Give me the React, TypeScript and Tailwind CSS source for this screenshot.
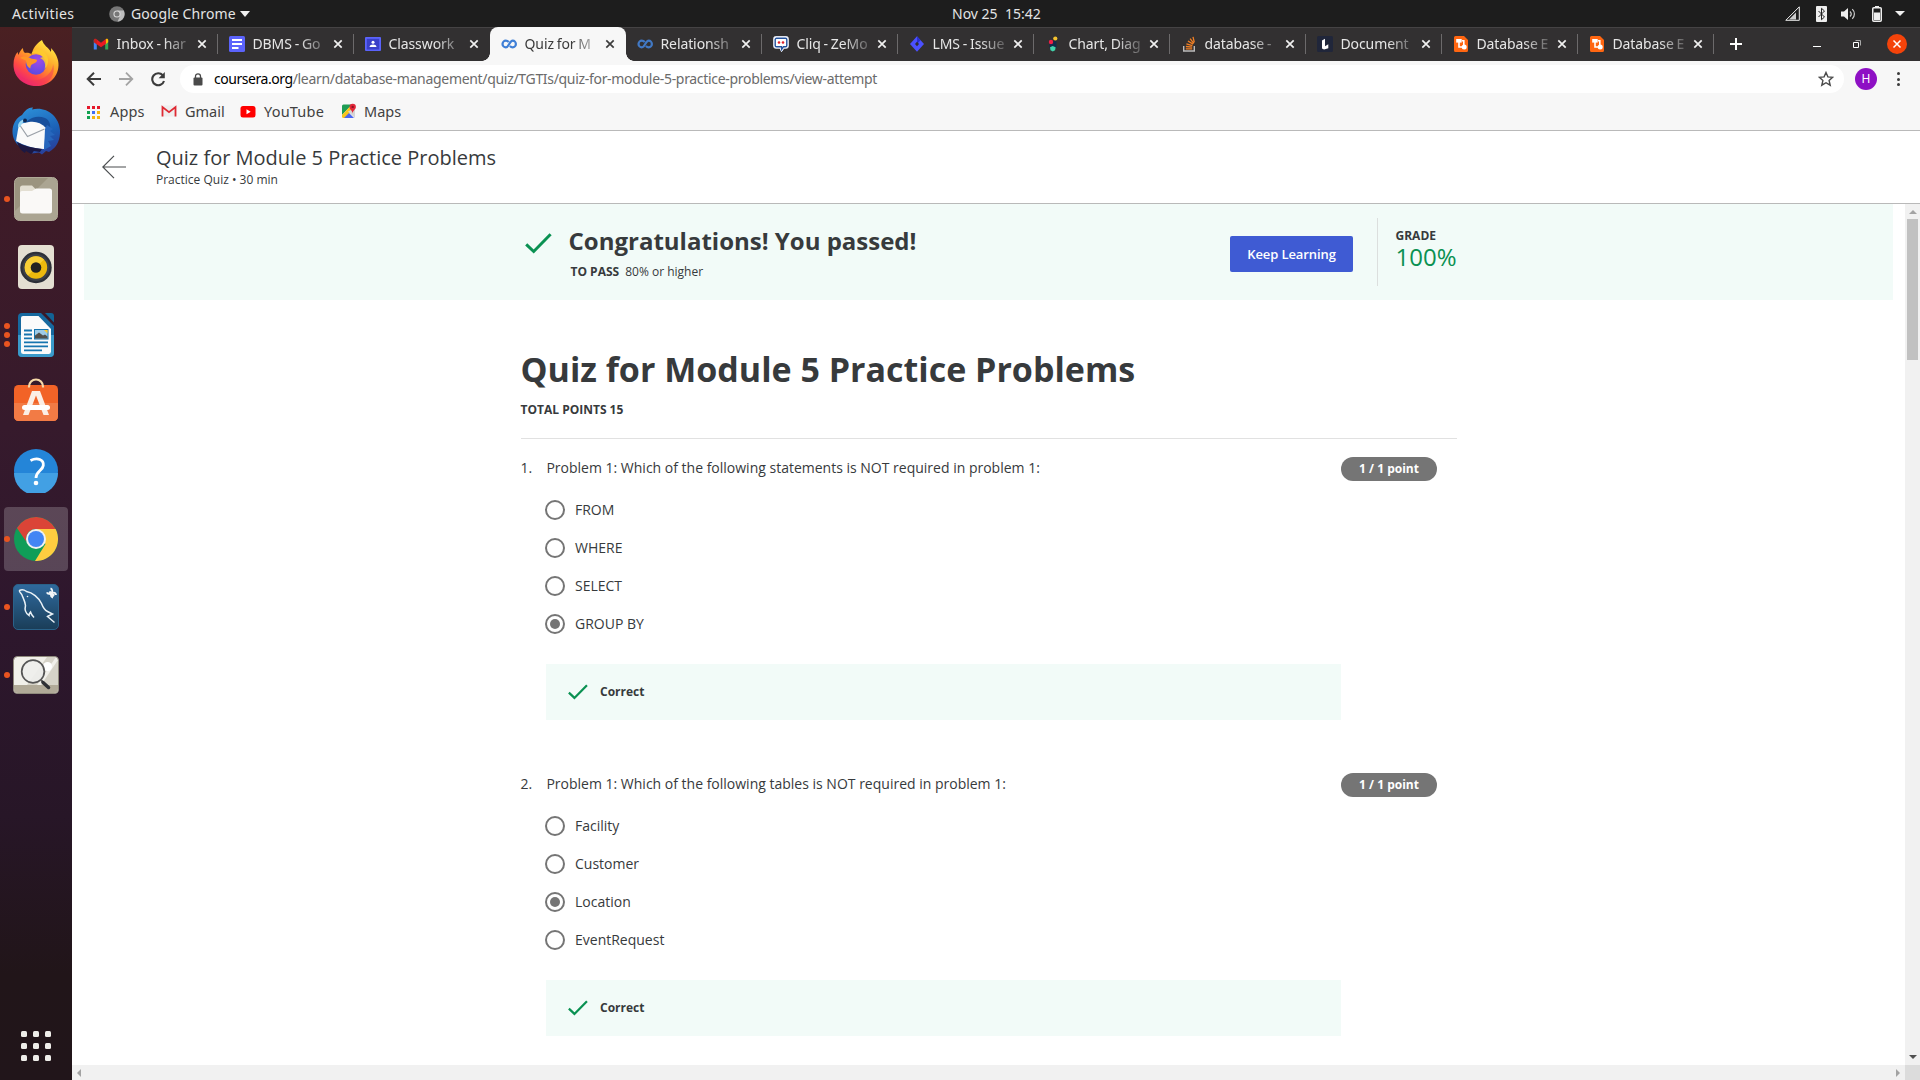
import React from "react";

const UI = "font-['Noto_Sans','Open_Sans',sans-serif]";

function Coursera({ color }: { color: string }) {
  return (
    <svg viewBox="0 0 16 16" className="h-4 w-4" fill="none" stroke={color} strokeWidth="2.200">
      <path d="M7.700 6C6.800 5 5.800 4.700 4.800 4.700a3.300 3.300 0 0 0 0 6.600C8 11.300 8.500 4.700 11.700 4.700a3.200 3.300 0 0 1 0 6.600c-1.200 0-2-.4-2.800-1.300" />
    </svg>
  );
}

function DocsIcon() {
  return (
    <svg viewBox="0 0 16 16" className="h-4 w-4">
      <rect width="16" height="16" rx="1.500" fill="#5b63fb" />
      <path d="M3 4h10M3 8h10M3 12h6.500" stroke="#fff" strokeWidth="1.800" />
    </svg>
  );
}

function ClassroomIcon() {
  return (
    <svg viewBox="0 0 16 16" className="h-4 w-4">
      <rect y="1" width="16" height="14" rx="1" fill="#5b63fb" />
      <rect x="1.800" y="2.800" width="12.400" height="10.700" fill="#3a40c8" />
      <circle cx="8" cy="6.300" r="1.500" fill="#fff" />
      <path d="M4.500 11c0-3.300 7-3.300 7 0z" fill="#fff" />
    </svg>
  );
}

function GmailColor() {
  return (
    <svg viewBox="0 0 16 16" className="h-4 w-4">
      <path d="M0.800 4v9.500h3V7z" fill="#4285f4" />
      <path d="M12.200 7v6.500h3V4z" fill="#34a853" />
      <path d="M12.200 4.800V8.400l3-2.200V4c0-1.200-1.500-1.600-2.300-.9z" fill="#fbbc04" />
      <path d="M3.300 3.100L8 6.700l4.700-3.600.3 4.700L8 11.300 3 7.800z" fill="#ea1a22" />
      <path d="M.8 4c0-1.200 1.500-1.600 2.500-.9l.5 5.300-3-2.200z" fill="#c5221f" />
    </svg>
  );
}

function CliqIcon() {
  return (
    <svg viewBox="0 0 16 16" className="h-4 w-4">
      <path d="M2.500 .6h11a1.800 1.800 0 0 1 1.800 1.800v8a1.800 1.800 0 0 1-1.800 1.800H11l-2.500 3.500L7 12.200H2.500A1.800 1.800 0 0 1 .7 10.400v-8A1.800 1.800 0 0 1 2.500 .6z" fill="#fff" stroke="#e8ecf8" />
      <path d="M3.500 2.300h9a1.300 1.300 0 0 1 1.300 1.300v5.800a1.300 1.300 0 0 1-1.300 1.300h-2L8.700 13.300 8.500 10.700h-5A1.300 1.300 0 0 1 2.200 9.400V3.600a1.300 1.300 0 0 1 1.300-1.300z" fill="#fff" stroke="#23519d" strokeWidth="1.400" />
      <circle cx="6" cy="6.500" r="1.300" fill="#e0202a" />
      <circle cx="10" cy="6.500" r="1.300" fill="#e0202a" />
    </svg>
  );
}

function JiraIcon() {
  return (
    <svg viewBox="0 0 16 16" className="h-4 w-4">
      <path d="M8 .3l7 7.700-7 7.700L1 8z" fill="#4b50ff" />
      <path d="M8 .3l3.500 3.900L8 8z" fill="#2a2fd0" />
      <path d="M8 5.700L10 8l-2 2.300L6 8z" fill="#302e30" />
    </svg>
  );
}

function ChartIcon() {
  return (
    <svg viewBox="0 0 16 16" className="h-4 w-4">
      <path d="M4.500 5h7v7H4.500z" fill="#132a4a" />
      <circle cx="10.300" cy="2.500" r="2.100" fill="#f5c22e" />
      <circle cx="6" cy="6" r="2.200" fill="#ef1f46" />
      <path d="M5 11.300l2.700-1.300 2.900 1.300-.5 3-2.300 1.200-2.300-1.200z" fill="#41d3ac" />
    </svg>
  );
}

function StackIcon() {
  return (
    <svg viewBox="0 0 16 16" className="h-4 w-4" fill="none">
      <path d="M2.700 10v5h10.600v-5" stroke="#bcbbbb" strokeWidth="1.400" />
      <path d="M4.800 12.900h6.400M4.900 10.500l6.300.6M5.400 7.800l6 1.800M6.900 5l5.200 3.100M9.100 2.600l3.700 4.700M12 .8l1.300 5.500" stroke="#f48024" strokeWidth="1.300" />
    </svg>
  );
}

function DocumentIcon() {
  return (
    <svg viewBox="0 0 16 16" className="h-4 w-4">
      <rect width="16" height="16" rx="1.500" fill="#20263a" />
      <path d="M5 4.500l3-1.800v7.600l3.300-2v4L7 13.400l-2-1z" fill="#fff" />
    </svg>
  );
}

function CreatelyIcon() {
  return (
    <svg viewBox="0 0 16 16" className="h-4 w-4">
      <path d="M1 1.500A1.500 1.500 0 0 1 2.500 0H11l4 4v10.500a1.500 1.500 0 0 1-1.500 1.500h-11A1.500 1.500 0 0 1 1 14.500z" fill="#ff6611" />
      <rect x="3.200" y="3" width="5.500" height="3.600" fill="#fff" />
      <path d="M6 6v5h4M9 4.800h1.800V9" stroke="#fff" strokeWidth="1.600" fill="none" />
      <circle cx="11.200" cy="11" r="2.500" fill="#fff" />
    </svg>
  );
}

const tabs = [
  { title: "Inbox - har", icon: <GmailColor /> },
  { title: "DBMS - Go", icon: <DocsIcon /> },
  { title: "Classwork", icon: <ClassroomIcon /> },
  { title: "Quiz for M", icon: <Coursera color="#3f7fd6" />, active: true },
  { title: "Relationsh", icon: <Coursera color="#4178c4" /> },
  { title: "Cliq - ZeMo", icon: <CliqIcon /> },
  { title: "LMS - Issue", icon: <JiraIcon /> },
  { title: "Chart, Diag", icon: <ChartIcon /> },
  { title: "database -", icon: <StackIcon /> },
  { title: "Document", icon: <DocumentIcon /> },
  { title: "Database E", icon: <CreatelyIcon /> },
  { title: "Database E", icon: <CreatelyIcon /> },
];

function Tab({ title, icon, active, divider }: { title: string; icon: React.ReactNode; active?: boolean; divider: boolean }) {
  return (
    <div
      className={
        "relative flex h-[34px] w-[136px] shrink-0 items-center pl-[11px] " +
        (active ? "rounded-t-lg bg-[#f7f7f7] text-[#3c3c3c]" : "text-[#e6e6e6]")
      }
    >
      {active && (
        <>
          <span className="absolute bottom-0 -left-2 h-2 w-2 bg-[radial-gradient(circle_at_0_0,#323031_7.500px,#f7f7f7_8px)]" />
          <span className="absolute -right-2 bottom-0 h-2 w-2 bg-[radial-gradient(circle_at_100%_0,#323031_7.500px,#f7f7f7_8px)]" />
        </>
      )}
      <span className="-ml-[0.500px] shrink-0">{icon}</span>
      <span className="ml-2 w-[75px] text-[14px] leading-5 tracking-[-0.100px] whitespace-nowrap [word-spacing:-0.700px] [mask-image:linear-gradient(to_right,#000_62%,rgba(0,0,0,0.150))]">
        {title}
      </span>
      <svg viewBox="0 0 10 10" className="ml-[5.500px] h-[10px] w-[10px]" stroke={active ? "#3c3c3c" : "#f0f0f0"} strokeWidth="1.700">
        <path d="M1.300 1.300l7.400 7.400M8.700 1.300L1.300 8.700" />
      </svg>
      {divider && <span className="absolute top-[7px] right-0 h-[20px] w-px bg-[#6c6a6b]" />}
    </div>
  );
}

function TopBar() {
  return (
    <div className={"flex h-[27px] shrink-0 items-center bg-[#1d1d1d] text-[14px] leading-5 text-[#e4e4e4] " + UI}>
      <span className="w-[97px] pl-3 tracking-[0.400px] whitespace-nowrap">Activities</span>
      <svg viewBox="0 0 16 16" className="ml-3 h-4 w-4">
        <circle cx="8" cy="8" r="7.800" fill="#777" />
        <path d="M8 4.500h6.700A7.800 7.800 0 0 1 8.500 15.700L11 10z" fill="#bdbdbd" />
        <circle cx="8" cy="8" r="3.600" fill="#d8d8d8" />
        <circle cx="8" cy="8" r="2.500" fill="#777" />
      </svg>
      <span className="ml-[6px] w-[105px] whitespace-nowrap tracking-[0.100px]">Google Chrome</span>
      <svg viewBox="0 0 10 6" className="ml-1 h-[6px] w-[10px]" fill="#f0f0f0"><path d="M0 0h10L5 6z" /></svg>
      <span className="ml-[702px] w-[90px] whitespace-pre">Nov 25  15:42</span>
      <div className="ml-auto flex items-center pr-[15px]">
        <svg viewBox="0 0 15 15" className="mr-[16px] h-[15px] w-[15px]">
          <path d="M.8 14.300L14.300.8v13.500z" fill="none" stroke="#eee" />
          <path d="M4 13.500L11 6.500v7z" fill="#ccc" />
        </svg>
        <svg viewBox="0 0 11 16" className="mr-[14px] h-4 w-[11px]">
          <rect width="11" height="16" rx="1" fill="#eee" />
          <path d="M2.500 5l6 6-3 2.700V2.300l3 2.700-6 6" fill="none" stroke="#222" />
        </svg>
        <svg viewBox="0 0 15 14" className="mr-[16px] h-[14px] w-[15px]">
          <path d="M0 4.500h3L7 1v12L3 9.500H0z" fill="#eee" />
          <path d="M9 4.500c1.500 1.500 1.500 3.500 0 5M11.300 2.200c2.800 2.800 2.800 6.800 0 9.600" fill="none" stroke="#ccc" strokeWidth="1.200" />
        </svg>
        <svg viewBox="0 0 10 16" className="mr-[13px] h-4 w-[10px]">
          <rect x="0.750" y="1.750" width="8.500" height="13.500" rx="1" fill="none" stroke="#eee" strokeWidth="1.500" />
          <path d="M3 0h4v2H3zM2 6.500h6V14H2z" fill="#eee" />
        </svg>
        <svg viewBox="0 0 10 5" className="h-[5px] w-[10px]" fill="#f0f0f0"><path d="M0 0h10L5 5z" /></svg>
      </div>
    </div>
  );
}

function Firefox() {
  return (
    <svg viewBox="0 0 46 46" className="h-[46px] w-[46px]">
      <defs>
        <linearGradient id="ff" x1="0.800" y1="0.100" x2="0.200" y2="1">
          <stop offset="0" stopColor="#ffe640" />
          <stop offset="0.400" stopColor="#ff9a28" />
          <stop offset="0.700" stopColor="#ff4a45" />
          <stop offset="1" stopColor="#e31587" />
        </linearGradient>
        <radialGradient id="ffp" cx="0.600" cy="0.300" r="0.700">
          <stop offset="0" stopColor="#a14ae6" />
          <stop offset="1" stopColor="#5b4be0" />
        </radialGradient>
      </defs>
      <path d="M29 0c2 6 6 7 9 12 0-1 .5-3 0-4 4 4 8 11 7.500 17.500C45 38 35 46 23.500 46 10 46 .5 36 .5 25c0-6 1.500-10 4-13l1 3c1-3 2.500-5.500 4.500-7 0 2 .5 4 2 5 3-.5 5 .3 7 1.500C19 9 24 3 29 0z" fill="url(#ff)" />
      <circle cx="23" cy="24.500" r="10.300" fill="url(#ffp)" />
      <path d="M18 14c3-1.500 9-1 12 3l-3 1c5 2 6 7 4.500 11 6-6 4-14-1.500-18C25 8 20 10 18 14z" fill="#ffcb2e" opacity="0.850" />
      <path d="M7 18c4-3 9-1 11 .5 3 1 6 .3 6 2 0 2.500-5 3-6 5-1 2-.5 3-.5 3C14 27 13 23 13 20.500z" fill="#ff9526" />
      <path d="M1 27c4 14 20 17 31 10 6-4 8-9 8-13 3 9-3 21-16 22C12 46.500 1 38 1 27z" fill="#f03060" opacity="0.450" />
    </svg>
  );
}

function Thunderbird() {
  return (
    <svg viewBox="0 0 48 48" className="h-12 w-12">
      <defs>
        <linearGradient id="tb" x1="0.300" y1="0" x2="0.700" y2="1">
          <stop offset="0" stopColor="#2c8fd8" />
          <stop offset="0.600" stopColor="#1b5fb5" />
          <stop offset="1" stopColor="#2a3d98" />
        </linearGradient>
      </defs>
      <path d="M10 8C13 3 17 0 21 .5l-1 2C34-1 47 9 48 23c.5 11-4 18-11 22l-3-1-4 3.500-3-2-7 1 1-2C11 45 0 36 .5 24 .7 17 4 11 10 8z" fill="url(#tb)" />
      <path d="M10 22c2-8 12-15 23-11 4 2 6 6 5 11l-4 8-20-8z" fill="#174f9c" />
      <path d="M7 17l10-2c7-1 12 1 17 6l-2 21C22 42 11 38 4 34z" fill="#fafafa" />
      <path d="M7 17l8.500 12.500L32.500 22" fill="none" stroke="#9ba1a8" strokeWidth="1.200" />
      <path d="M35 18l6 4-3 2 5 4-5 1 4 4-6 1 3 5-7 4 1-21z" fill="#2767bd" />
      <path d="M5 35c7 4 16 6 25 7l-2 3-6-1-3 3-5-3-1 2c-4-2-7-7-8-11z" fill="#1c1842" />
      <path d="M6 20c0-5 3-7 7-8l-5 8z" fill="#9bd7f2" />
      <circle cx="13" cy="13.500" r="2" fill="#0d2752" />
    </svg>
  );
}

function Files() {
  return (
    <svg viewBox="0 0 44 44" className="h-11 w-11">
      <rect x="0.500" y="0.500" width="43" height="43" rx="5" fill="#9b947f" stroke="#b0aa98" />
      <path d="M34 1h5a4 4 0 0 1 4 4v34a4 4 0 0 1-4 4H5a4 4 0 0 1-4-4v-5z" fill="#aba592" />
      <path d="M6 11a2.500 2.500 0 0 1 2.500-2.500H18l4 4h10V20H6z" fill="#e3dfd2" />
      <path d="M6 16a2 2 0 0 1 2-2h10l4-2.500h13.500A2.500 2.500 0 0 1 38 14v20a2.500 2.500 0 0 1-2.500 2.500h-27A2.500 2.500 0 0 1 6 34z" fill="#faf9f7" />
    </svg>
  );
}

function Rhythmbox() {
  return (
    <svg viewBox="0 0 36 44" className="h-11 w-9">
      <rect width="36" height="44" rx="4" fill="#e4dfd2" />
      <circle cx="18" cy="22.500" r="15.700" fill="#2d3038" />
      <circle cx="18" cy="22.500" r="13.500" fill="#3d4148" />
      <circle cx="18" cy="22.500" r="11.200" fill="#ecb90d" />
      <path d="M10 14.500a11.200 11.200 0 0 1 16 0L10 30.500a11.200 11.200 0 0 1 0-16z" fill="#f8cf37" />
      <circle cx="18" cy="22.500" r="5.300" fill="#222" />
    </svg>
  );
}

function Writer() {
  return (
    <svg viewBox="0 0 36 44" className="h-11 w-9">
      <path d="M4 0h19l13 13v27a4 4 0 0 1-4 4H4a4 4 0 0 1-4-4V4a4 4 0 0 1 4-4z" fill="#16699f" />
      <path d="M0 22h36v18a4 4 0 0 1-4 4H4a4 4 0 0 1-4-4z" fill="#3a9aca" />
      <path d="M27 0h6a3 3 0 0 1 3 3v6.500z" fill="#126395" />
      <path d="M5 3h15.500L33 16v22.500a2.500 2.500 0 0 1-2.500 2.500h-25A2.500 2.500 0 0 1 3 38.500V5a2 2 0 0 1 2-2z" fill="#fbfbfb" />
      <path d="M6 17.500h8M6 21.500h8M6 25.300h8M6 29.300h24M6 33.300h24M6 37.300h18" stroke="#1675af" strokeWidth="1.800" />
      <rect x="16.500" y="16.500" width="13.500" height="9.500" fill="#9dcbe8" stroke="#1675af" />
      <path d="M17 25.500v-3l4-3 4 3 2-1 2.500 2v2z" fill="#50504c" />
      <path d="M26 17h3.500v3.500z" fill="#ffca28" />
    </svg>
  );
}

function Software() {
  return (
    <svg viewBox="0 0 44 43" className="mb-[7px] h-[43px] w-11">
      <rect y="7" width="44" height="36" rx="4.500" fill="#f26327" />
      <path d="M0 25h44v13.500a4.500 4.500 0 0 1-4.500 4.500h-35A4.500 4.500 0 0 1 0 38.500z" fill="#f27b45" />
      <path d="M15 9.500V8.500a7 7 0 0 1 14 0v1" fill="none" stroke="#f7d9a8" strokeWidth="2.200" />
      <path d="M18 13h8l9 24h-5.500L22 17.500 14.500 37H9z" fill="#fbeee5" />
      <rect x="8" y="27" width="28" height="5" rx="2.500" fill="#fff" />
    </svg>
  );
}

function Help() {
  return (
    <svg viewBox="0 0 44 44" className="h-11 w-11">
      <circle cx="22" cy="22" r="22" fill="#2485d8" />
      <path d="M0 24h44a22 22 0 0 1-44 0z" fill="#42a0e4" />
      <path d="M16.500 11.500c7-3.500 13.500-1 12.800 5-.6 5-7.300 5.500-7.300 12.500" fill="none" stroke="#fff" strokeWidth="2.800" />
      <circle cx="22" cy="34" r="2.300" fill="#fff" />
    </svg>
  );
}

function Chrome() {
  return (
    <svg viewBox="0 0 44 44" className="h-11 w-11">
      <circle cx="22" cy="22" r="22" fill="#0f9d58" />
      <path d="M22 12h19.600A22 22 0 0 1 21 44l10.500-17z" fill="#ffcd40" />
      <path d="M3 11A22 22 0 0 1 41.600 12H22a10 10 0 0 0-9.500 13z" fill="#db4437" />
      <circle cx="22" cy="22" r="10" fill="#f1f1f1" />
      <circle cx="22" cy="22" r="8" fill="#4285f4" />
    </svg>
  );
}

function Workbench() {
  return (
    <svg viewBox="0 0 46 46" className="h-[46px] w-[46px]">
      <defs>
        <linearGradient id="wb" x1="0" y1="0" x2="0" y2="1">
          <stop offset="0" stopColor="#2f6a9e" />
          <stop offset="1" stopColor="#1a3d58" />
        </linearGradient>
      </defs>
      <rect x="0.500" y="0.500" width="45" height="45" rx="4.500" fill="url(#wb)" stroke="#2a6289" />
      <path d="M21 33.500c-1.500-1.500-3-3.500-3.500-5.500-1 1-1.500 2-1.500 3.500-3-2-4.500-6-3.500-10C12 17 10 14 9 11c-1-2-3-3-2.500-4.500 2-1 5-.5 7 1 6 1 12 6 15 12 1.500 4 3 6.500 6 8l5 2.500-5 2.500 7 6" fill="none" stroke="#e9f1f6" strokeWidth="1.500" />
      <path d="M36 8l5 4" stroke="#f1f5f8" strokeWidth="3.200" />
      <path d="M33.800 8.300a2.900 2.900 0 1 0 3.700-4M40 13.500a2.500 2.500 0 1 1 3-2.500" fill="none" stroke="#f1f5f8" strokeWidth="1.800" />
      <circle cx="14.500" cy="12.500" r="0.800" fill="#e9f1f6" />
    </svg>
  );
}

function Viewer() {
  return (
    <svg viewBox="0 0 46 38" className="h-[38px] w-[46px]">
      <rect x="0.500" y="0.500" width="45" height="37" rx="4" fill="#f1f0ea" stroke="#8f8a7c" />
      <path d="M28 29L45 4v25zM14 29L34 1h9L24 29z" fill="#d6d3c8" />
      <path d="M1 29h44v4a4 4 0 0 1-4 4H5a4 4 0 0 1-4-4z" fill="#b1aa98" />
      <circle cx="34.500" cy="10.500" r="4.500" fill="#fff" />
      <circle cx="20" cy="15.500" r="11.300" fill="#eeeeec" fillOpacity="0.900" stroke="#555" strokeWidth="1.700" />
      <path d="M28 24l2.500 2.500" stroke="#555" strokeWidth="2" />
      <path d="M30 26.500l5.500 5" stroke="#2e3034" strokeWidth="3.500" strokeLinecap="round" />
    </svg>
  );
}

const dock = [
  { icon: <Firefox />, dots: 0 },
  { icon: <Thunderbird />, dots: 0 },
  { icon: <Files />, dots: 1 },
  { icon: <Rhythmbox />, dots: 0 },
  { icon: <Writer />, dots: 3 },
  { icon: <Software />, dots: 0 },
  { icon: <Help />, dots: 0 },
  { icon: <Chrome />, dots: 1, active: true },
  { icon: <Workbench />, dots: 1 },
  { icon: <Viewer />, dots: 1 },
];

function Dock() {
  return (
    <div className="flex w-[72px] shrink-0 flex-col items-center gap-1 bg-[linear-gradient(to_bottom,#4a2022_0%,#3f1b27_14%,#361a2c_38%,#2e172d_55%,#271627_75%,#211519_90%,#21151a_100%)] pt-[4px]">
      {dock.map((d, i) => (
        <div key={i} className={"relative flex h-16 w-16 shrink-0 items-center justify-center rounded " + (d.active ? "bg-white/20" : "")}>
          {d.icon}
          {d.dots > 0 && (
            <div className="absolute top-0 left-0 flex h-full flex-col justify-center gap-[3px]">
              {Array.from({ length: d.dots }, (_, k) => (
                <span key={k} className="h-[6px] w-[6px] rounded-full bg-[#e95420]" />
              ))}
            </div>
          )}
        </div>
      ))}
      <div className="mt-auto mb-[19px] grid grid-cols-3 gap-[6px]">
        {Array.from({ length: 9 }, (_, k) => (
          <span key={k} className="h-[6px] w-[6px] rounded-[1.500px] bg-[#efeeea]" />
        ))}
      </div>
    </div>
  );
}

function TabStrip() {
  return (
    <div className="flex h-[34px] shrink-0 items-center bg-[#323031] pl-[10px] shadow-[inset_0_1px_0_#454344]">
      {tabs.map((t, i) => (
        <Tab key={i} title={t.title} icon={t.icon} active={t.active} divider={i !== 2 && i !== 3} />
      ))}
      <svg viewBox="0 0 12 12" className="ml-[16px] h-3 w-3" stroke="#fff" strokeWidth="2"><path d="M6 0v12M0 6h12" /></svg>
      <div className="ml-auto flex items-center pr-[13px]">
        <span className="mt-[5px] mr-[32px] h-px w-2 bg-white" />
        <svg viewBox="0 0 8 8" className="mr-[26px] h-2 w-2" fill="none"><path d="M2.500.5h5v5" stroke="#aaa" /><path d="M.5 2.500h5v5h-5z" stroke="#fff" /></svg>
        <svg viewBox="0 0 20 20" className="h-5 w-5">
          <circle cx="10" cy="10" r="10" fill="#f4430a" />
          <path d="M6.500 6.500l7 7M13.500 6.500l-7 7" stroke="#fff" strokeWidth="1.500" />
        </svg>
      </div>
    </div>
  );
}

function Toolbar() {
  return (
    <div className="flex h-9 shrink-0 items-center bg-[#f7f7f7] pl-[14px]">
      <svg viewBox="0 0 16 16" className="h-4 w-4" fill="none" stroke="#3b3b3b" strokeWidth="2"><path d="M15 8H2M8 1.700L1.700 8 8 14.300" /></svg>
      <svg viewBox="0 0 16 16" className="ml-4 h-4 w-4" fill="none" stroke="#a3a3a3" strokeWidth="1.800"><path d="M1 8h13M8 1.700L14.300 8 8 14.300" /></svg>
      <svg viewBox="0 0 16 16" className="ml-4 h-4 w-4">
        <path d="M12.800 4.300A6 6 0 1 0 14 10" fill="none" stroke="#3b3b3b" strokeWidth="2.100" />
        <path d="M14.800 1v6.200H8.600z" fill="#3b3b3b" />
      </svg>
      <div className="ml-[14px] flex h-7 w-[1664px] items-center rounded-full bg-white pl-[13px]">
        <svg viewBox="0 0 10 13" className="h-[13px] w-[10px]">
          <rect x="0.500" y="4.500" width="9" height="8" rx="1" fill="#4a4a4a" />
          <path d="M2.500 5V3.300a2.500 2.500 0 0 1 5 0V5" fill="none" stroke="#4a4a4a" strokeWidth="1.300" />
        </svg>
        <span className="ml-[11px] text-[14px] leading-5 tracking-[-0.313px] whitespace-nowrap text-[#6b6b6b]">
          <span className="tracking-[-0.450px] text-black">coursera.org</span>/learn/database-management/quiz/TGTIs/quiz-for-module-5-practice-problems/view-attempt
        </span>
        <svg viewBox="0 0 16 16" className="mr-[10px] ml-auto h-4 w-4" fill="none" stroke="#4a4a4a" strokeWidth="1.400">
          <path d="M8 1.500l1.900 4.400 4.800.4-3.600 3.200 1.100 4.700L8 11.700l-4.200 2.500 1.100-4.700L1.300 6.300l4.800-.4z" />
        </svg>
      </div>
      <span className="ml-[11px] flex h-[22px] w-[22px] items-center justify-center rounded-full bg-[#8e10c4] text-[12px] leading-none text-white">H</span>
      <div className="ml-[20px] flex flex-col gap-[2.500px]">
        <span className="h-[3px] w-[3px] rounded-full bg-[#3b3b3b]" />
        <span className="h-[3px] w-[3px] rounded-full bg-[#3b3b3b]" />
        <span className="h-[3px] w-[3px] rounded-full bg-[#3b3b3b]" />
      </div>
    </div>
  );
}

function Bookmarks() {
  const colors = ["bg-[#e5192b]", "bg-[#e5192b]", "bg-[#e5192b]", "bg-[#12a150]", "bg-[#3f6df3]", "bg-[#f5b50f]", "bg-[#12a150]", "bg-[#f5b50f]", "bg-[#f5b50f]"];
  return (
    <div className="flex h-[33px] shrink-0 items-center bg-[#f7f7f7] pb-[5px] pl-[15px] text-[14.500px] leading-5 text-[#414141]">
      <div className="mt-[2px] grid grid-cols-3 gap-[2px]">
        {colors.map((c, i) => <span key={i} className={"h-[3px] w-[3px] " + c} />)}
      </div>
      <span className="ml-[10px] w-[51px] tracking-[0.150px]">Apps</span>
      <svg viewBox="0 0 16 16" className="h-4 w-4">
        <rect x="0.500" y="2.500" width="15" height="11" rx="1" fill="#eee" />
        <path d="M1.500 13.500V4L8 9.200 14.500 4v9.500" fill="none" stroke="#df2a33" strokeWidth="1.800" />
      </svg>
      <span className="ml-2 w-[55px]">Gmail</span>
      <svg viewBox="0 0 16 12" className="mt-px h-3 w-4">
        <rect x="0.500" width="15" height="11.500" rx="2.500" fill="#f00" />
        <path d="M6.500 3.300v5L10.700 5.800z" fill="#fff" />
      </svg>
      <span className="ml-2 w-[77px] tracking-[0.200px]">YouTube</span>
      <svg viewBox="0 0 16 16" className="h-4 w-4">
        <path d="M1 3a1.500 1.500 0 0 1 1.500-1.500H11L1 12z" fill="#1f9d55" />
        <path d="M1 12L10.500 2l3 3L4 15H2.500A1.500 1.500 0 0 1 1 13.500z" fill="#f8c51c" />
        <path d="M7 8.500l7 6.500V5z" fill="#d5d5d5" />
        <path d="M3 15l5-5 5 5z" fill="#4b66f0" />
        <path d="M11.500 10.500c0-3-3-4-3-6.500a3.200 3.200 0 0 1 6.400 0c0 2.500-3 3.500-3.400 6.500z" fill="#e2283a" />
        <circle cx="11.700" cy="3.900" r="1.200" fill="#8c1420" />
      </svg>
      <span className="ml-[7px]">Maps</span>
    </div>
  );
}

function Check({ className }: { className: string }) {
  return (
    <svg viewBox="0 0 27 21" className={className} fill="none" stroke="#0a9152" strokeWidth="3">
      <path d="M1.200 11.300l7.500 7.200L25.600 1.300" />
    </svg>
  );
}

const questions = [
  { text: "Problem 1: Which of the following statements is NOT required in problem 1:", options: ["FROM", "WHERE", "SELECT", "GROUP BY"], picked: 3 },
  { text: "Problem 1: Which of the following tables is NOT required in problem 1:", options: ["Facility", "Customer", "Location", "EventRequest"], picked: 2 },
];

function Question({ n, q }: { n: number; q: (typeof questions)[number] }) {
  return (
    <div className="mb-[60px] flex h-[256px] text-[14px] leading-[21px] text-[#373a3c]">
      <span className="-ml-[0.500px] w-[25.500px]">{n}.</span>
      <div className="w-[795px]">
        <p className="ml-[0.400px]">{q.text}</p>
        <div className="mt-[12px]">
          {q.options.map((o, i) => (
            <div key={o} className="flex h-[38px] items-center">
              <span className="mt-px -ml-px flex h-5 w-5 items-center justify-center rounded-full border-2 border-[#757575]">
                {i === q.picked && <span className="h-[10px] w-[10px] rounded-full bg-[#757575]" />}
              </span>
              <span className="ml-[10px]">{o}</span>
            </div>
          ))}
        </div>
        <div className="mt-[22px] flex h-14 items-center bg-[#f2fbf8] pl-[22px]">
          <Check className="h-4 w-5" />
          <span className="ml-3 -mt-px text-[12px] font-bold">Correct</span>
        </div>
      </div>
      <span className="flex h-6 w-24 items-center justify-center rounded-full bg-[#757575] pb-[2px] text-[12px] font-bold whitespace-nowrap text-white">1 / 1 point</span>
    </div>
  );
}

function Page() {
  return (
    <div className="flex min-h-0 flex-1 flex-col border-t border-[#b9b9b9] bg-white font-['Open_Sans',sans-serif] text-[#373a3c]">
      <header className="flex h-[73px] shrink-0 border-b border-[#b9b9b9]">
        <svg viewBox="0 0 24 24" className="mt-[24px] ml-[30px] h-6 w-6" fill="none" stroke="#4a4d4f" strokeWidth="1.200">
          <path d="M24 12H1M12 .8L.8 12 12 23.200" />
        </svg>
        <div className="ml-[30px] pt-[13px]">
          <h1 className="text-[20px] leading-7">Quiz for Module 5 Practice Problems</h1>
          <p className="text-[12px] leading-4">Practice Quiz • 30 min</p>
        </div>
      </header>
      <div className="flex min-h-0 flex-1">
        <main className="min-w-0 flex-1 overflow-hidden px-3">
          <div className="flex h-24 bg-[#f2fbf8] pl-[441px]">
            <Check className="mt-[29px] h-[21px] w-[27px]" />
            <div className="ml-4 w-[662px] pt-[19px] pl-[0.500px]">
              <h2 className="text-[24px] leading-9 font-bold">Congratulations! You passed!</h2>
              <p className="mt-[4px] ml-[2px] text-[12px] leading-[18px]">
                <b className="mr-[6px]">TO PASS</b>80% or higher
              </p>
            </div>
            <button className="mt-8 h-9 w-[123px] rounded-[2px] bg-[#3f5bd3] pt-[2px] text-[13px] font-semibold tracking-[-0.100px] text-white">Keep Learning</button>
            <div className="mt-[14px] ml-[24px] h-[68px] border-l border-[#dcdfde] pl-[17.500px]">
              <p className="pt-[10px] text-[12px] leading-4 font-bold">GRADE</p>
              <p className="text-[24px] leading-[26px] text-[#0a9152]">100%</p>
            </div>
          </div>
          <div className="ml-[437px] w-[936px]">
            <h2 className="-ml-[0.500px] pt-[45px] text-[34px] leading-[48px] font-bold">Quiz for Module 5 Practice Problems</h2>
            <p className="mt-[7px] h-[39px] border-b border-[#e1e1e1] text-[12px] leading-[20px] font-bold">
              <span className="-ml-[0.500px]">TOTAL POINTS 15</span>
            </p>
            <div className="pt-[18px]">
              {questions.map((q, i) => <Question key={i} n={i + 1} q={q} />)}
            </div>
          </div>
        </main>
        <div className="flex w-[15px] shrink-0 flex-col items-center bg-[#f1f1f1]">
          <svg viewBox="0 0 8 4" className="mt-[6px] h-[4px] w-[8px]" fill="#a3a3a3"><path d="M0 4h8L4 0z" /></svg>
          <span className="mt-[5px] h-[141px] w-[11px] bg-[#c1c1c1]" />
          <svg viewBox="0 0 8 4" className="mt-auto mb-[6px] h-[4px] w-[8px]" fill="#505050"><path d="M0 0h8L4 4z" /></svg>
        </div>
      </div>
      <div className="flex h-[15px] shrink-0 items-center bg-[#f1f1f1]">
        <svg viewBox="0 0 4 8" className="ml-[5px] h-[8px] w-[4px]" fill="#a3a3a3"><path d="M4 0v8L0 4z" /></svg>
        <svg viewBox="0 0 4 8" className="mr-[5px] ml-auto h-[8px] w-[4px]" fill="#a3a3a3"><path d="M0 0v8l4-4z" /></svg>
        <span className="h-[15px] w-[15px] bg-[#dcdcdc]" />
      </div>
    </div>
  );
}

export default function App() {
  return (
    <div className="flex h-[1080px] w-[1920px] flex-col overflow-hidden">
      <TopBar />
      <div className="flex min-h-0 flex-1">
        <Dock />
        <div className={"flex min-w-0 flex-1 flex-col " + UI}>
          <TabStrip />
          <Toolbar />
          <Bookmarks />
          <Page />
        </div>
      </div>
    </div>
  );
}
